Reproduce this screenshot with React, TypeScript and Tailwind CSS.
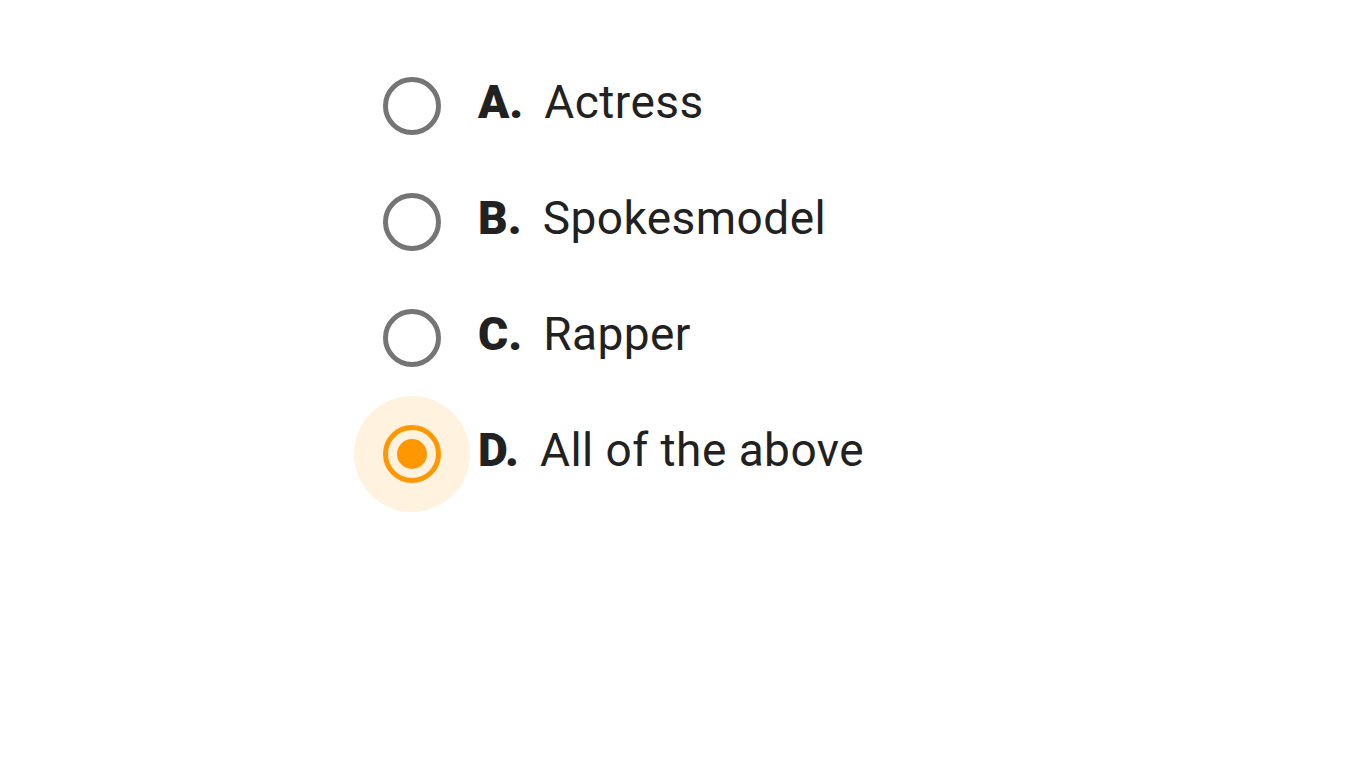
import React, { useState } from 'react';

const options = [
  { key: 'A', text: 'Actress' },
  { key: 'B', text: 'Spokesmodel' },
  { key: 'C', text: 'Rapper' },
  { key: 'D', text: 'All of the above' },
];

export default function App() {
  const [selected, setSelected] = useState('D');

  return (
    <div className="min-h-screen bg-white font-['Roboto',sans-serif] text-[#212121]">
      <div className="flex flex-col pl-[354px] pt-[48px]">
        {options.map((o) => {
          const on = o.key === selected;
          return (
            <label key={o.key} className="flex h-[116px] cursor-pointer items-center" onClick={() => setSelected(o.key)}>
              <span className={`flex h-[116px] w-[116px] items-center justify-center rounded-full ${on ? 'bg-[#fff3e0]' : ''}`}>
                <span
                  className={`flex h-[58px] w-[58px] items-center justify-center rounded-full border-[5px] ${
                    on ? 'border-[#ff9800]' : 'border-[#757575]'
                  }`}
                >
                  {on && <span className="h-[30px] w-[30px] rounded-full bg-[#ff9800]" />}
                </span>
              </span>
              <span className="ml-[8px] mr-[21px] pb-[8px] text-[46px] font-black leading-none">{o.key}.</span>
              <span className="pb-[8px] text-[46px] leading-none tracking-[0.01em]">{o.text}</span>
            </label>
          );
        })}
      </div>
    </div>
  );
}
